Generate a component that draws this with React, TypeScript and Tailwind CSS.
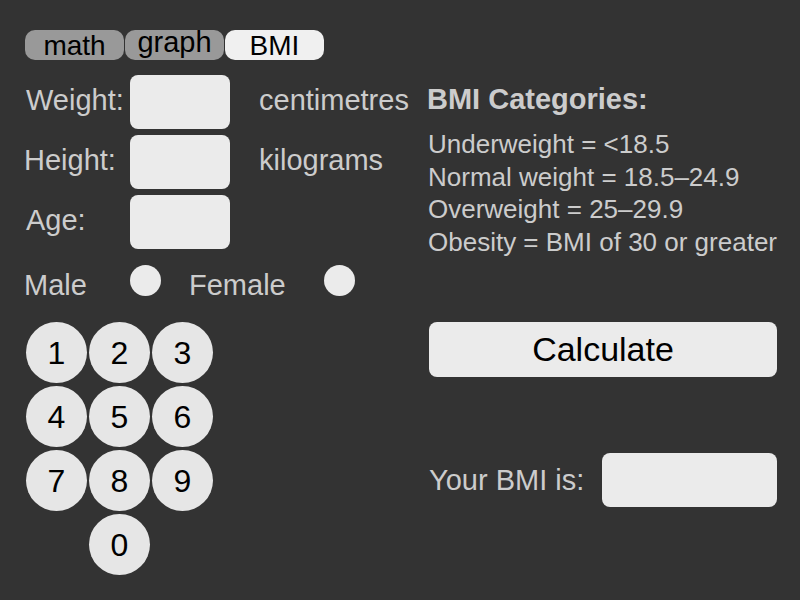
import React from "react";

const font = { fontFamily: '"Liberation Sans", Arial, sans-serif' };

function Box({ className = "" }: { className?: string }) {
  return <div className={`bg-[#ebebeb] rounded-[8px] ${className}`} />;
}

export default function App() {
  const keys = ["1", "2", "3", "4", "5", "6", "7", "8", "9"];
  return (
    <div className="w-[800px] h-[600px] bg-[#333333] overflow-hidden text-[#cccccc]" style={font}>
      {/* Tabs */}
      <div className="flex gap-[1px] pl-[25px] pt-[30px]">
        <div className="w-[99px] h-[30px] rounded-[10px] bg-[#999999] text-black text-[28px] leading-[30px] text-center">
          <span className="inline-block translate-y-[1px]">math</span>
        </div>
        <div className="w-[99px] h-[30px] rounded-[10px] bg-[#999999] text-black text-[29px] leading-[30px] text-center">
          <span className="inline-block -translate-y-[3px]">graph</span>
        </div>
        <div className="w-[99px] h-[30px] rounded-[10px] bg-[#f0f0f0] text-black text-[28px] leading-[30px] text-center">
          <span className="inline-block translate-y-[1px]">BMI</span>
        </div>
      </div>

      <div className="flex mt-[15px]">
        {/* Left column */}
        <div className="w-[427px] flex flex-col">
          <div className="flex items-center h-[54px]">
            <div className="w-[130px] pl-[26px] text-[29px] leading-[32px] -translate-y-[2px]">Weight:</div>
            <Box className="w-[100px] h-[54px]" />
            <div className="pl-[29px] text-[29px] leading-[32px] -translate-y-[2px]">centimetres</div>
          </div>
          <div className="flex items-center h-[54px] mt-[6px]">
            <div className="w-[130px] pl-[24px] text-[29px] leading-[32px] -translate-y-[2px]">Height:</div>
            <Box className="w-[100px] h-[54px]" />
            <div className="pl-[29px] text-[29px] leading-[32px] -translate-y-[2px]">kilograms</div>
          </div>
          <div className="flex items-center h-[54px] mt-[6px]">
            <div className="w-[130px] pl-[26px] text-[29px] leading-[32px] -translate-y-[2px]">Age:</div>
            <Box className="w-[100px] h-[54px]" />
          </div>
          <div className="flex items-start mt-[16px]">
            <div className="w-[130px] pl-[24px] text-[29px] leading-[32px] mt-[4px]">Male</div>
            <div className="w-[31px] h-[31px] rounded-full bg-[#ebebeb]" />
            <div className="w-[163px] pl-[28px] text-[29px] leading-[32px] mt-[4px]">Female</div>
            <div className="w-[31px] h-[31px] rounded-full bg-[#ebebeb]" />
          </div>
          <div className="grid grid-cols-[61px_61px_61px] gap-x-[2px] gap-y-[3px] ml-[26px] mt-[21px]">
            {keys.map((k) => (
              <div
                key={k}
                className="w-[61px] h-[61px] rounded-full bg-[#e6e6e6] text-black text-[32px] flex items-center justify-center"
              >
                {k}
              </div>
            ))}
            <div />
            <div className="w-[61px] h-[61px] rounded-full bg-[#e6e6e6] text-black text-[32px] flex items-center justify-center">
              0
            </div>
          </div>
        </div>

        {/* Right column */}
        <div className="flex flex-col pt-[9px]">
          <div className="text-[29px] leading-[32px] font-bold -translate-y-[1px]">BMI Categories:</div>
          <div className="mt-[13px] pl-[1px] text-[26px] leading-[32.5px] -translate-y-[1px]">
            <div>Underweight = &lt;18.5</div>
            <div>Normal weight = 18.5–24.9</div>
            <div>Overweight = 25–29.9</div>
            <div>Obesity = BMI of 30 or greater</div>
          </div>
          <div className="ml-[2px] mt-[63px] w-[348px] h-[55px] rounded-[8px] bg-[#ebebeb] text-black text-[34px] flex items-center justify-center">
            Calculate
          </div>
          <div className="ml-[2px] mt-[76px] flex items-center">
            <div className="w-[173px] text-[29px] leading-[32px]">Your BMI is:</div>
            <Box className="w-[175px] h-[54px]" />
          </div>
        </div>
      </div>
    </div>
  );
}
